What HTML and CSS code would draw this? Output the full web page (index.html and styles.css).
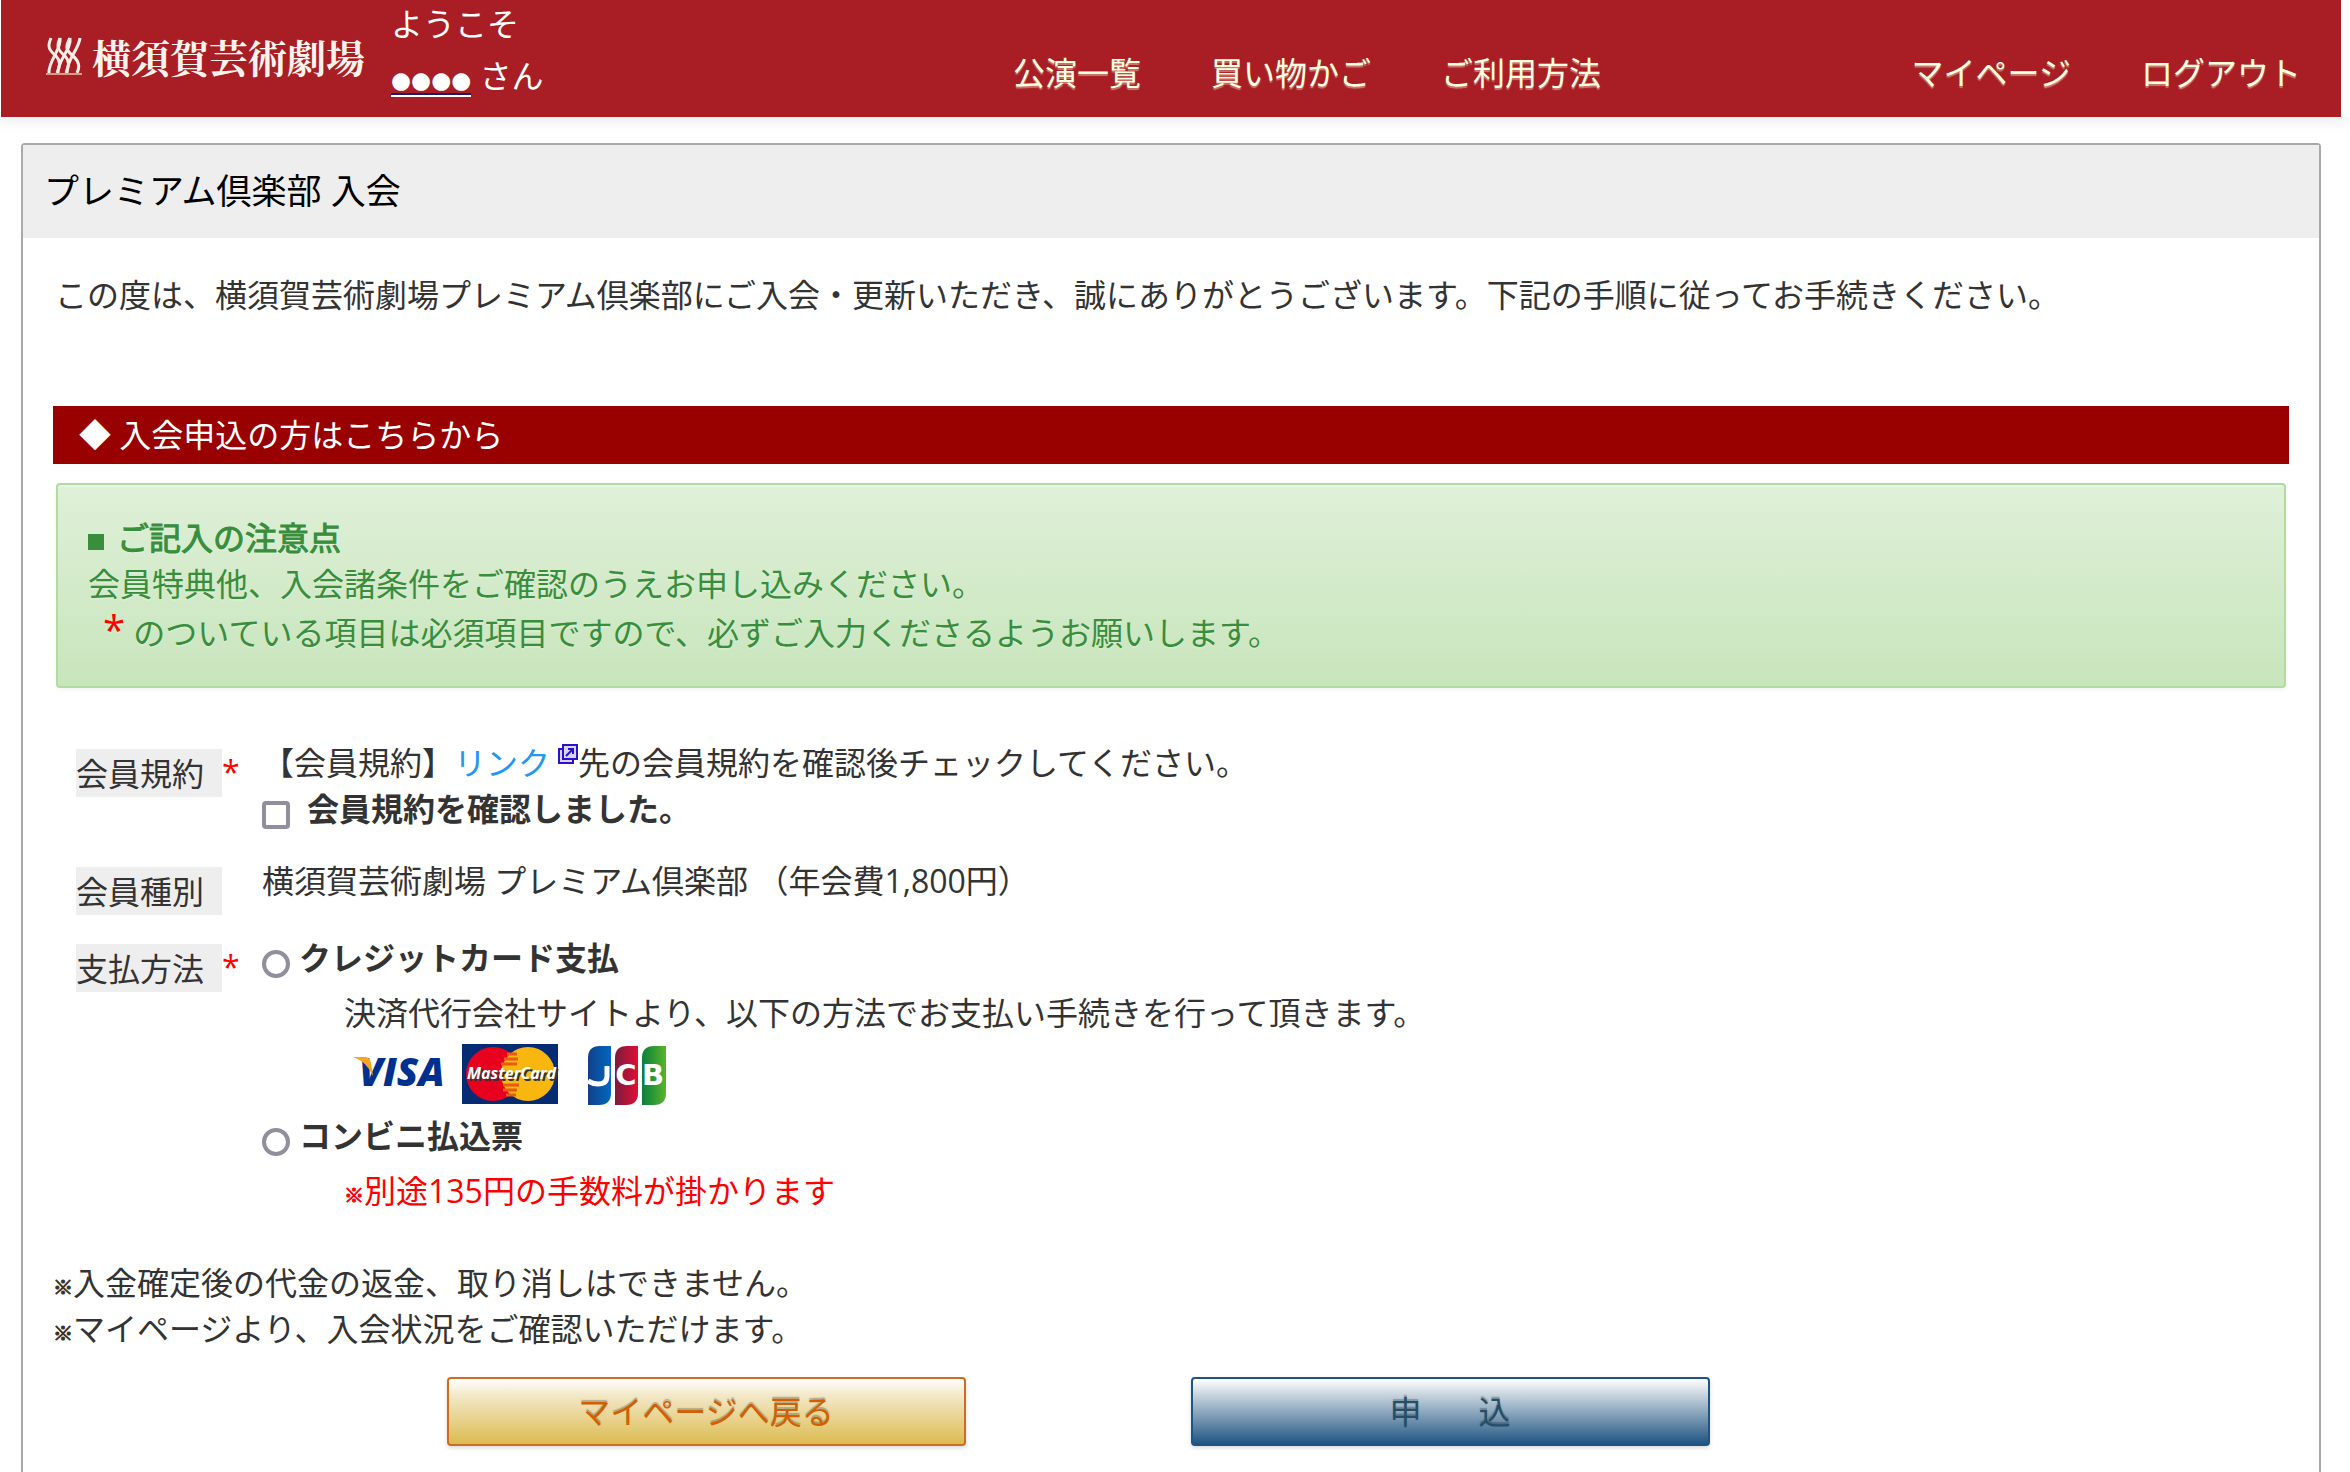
FILE: index.html
```
<!DOCTYPE html>
<html lang="ja">
<head>
    <meta charset="UTF-8">
    <meta name="viewport" content="width=device-width, initial-scale=1.0">
    <title>プレミアム倶楽部 入会</title>
    <link rel="stylesheet" href="styles.css">
</head>
<body>
    <header class="header">
        <div class="header-inner">
            <a class="logo" href="#">
                <svg class="logo-mark" viewBox="0 0 36 38" aria-hidden="true">
                    <g fill="none" stroke="#fbeee6" stroke-width="3">
                        <path d="M5 1C1 10 3 13 10 19C15 24 14 30 11 36"/>
                        <path d="M14 1C10 10 12 13 19 19C24 24 23 30 20 36"/>
                        <path d="M24 1C19 10 20 13 27 19C33 24 34 30 31 36"/>
                        <path d="M14 1C16 12 2 24 3 36M24 1C26 12 11 24 12 36M34 1C33 12 20 24 21 36"/>
                    </g>
                    <path d="M0 37h36" stroke="#d99b86" stroke-width="2"/>
                </svg>
                <span class="logo-text">横須賀芸術劇場</span>
            </a>
            <div class="welcome">
                <div>ようこそ</div>
                <div><a class="user-name" href="#">●●●●</a> さん</div>
            </div>
            <nav class="nav nav-main">
                <a href="#">公演一覧</a>
                <a href="#">買い物かご</a>
                <a href="#">ご利用方法</a>
            </nav>
            <nav class="nav nav-user">
                <a href="#">マイページ</a>
                <a href="#">ログアウト</a>
            </nav>
        </div>
    </header>

    <main class="panel">
        <h1 class="panel-title">プレミアム倶楽部 入会</h1>
        <form class="panel-body">
            <p class="intro">この度は、横須賀芸術劇場プレミアム倶楽部にご入会・更新いただき、誠にありがとうございます。下記の手順に従ってお手続きください。</p>

            <h2 class="section-title">◆ 入会申込の方はこちらから</h2>

            <div class="notice">
                <div class="notice-title"><span class="square"></span>ご記入の注意点</div>
                <div>会員特典他、入会諸条件をご確認のうえお申し込みください。</div>
                <div class="notice-required"><span class="star">*</span> のついている項目は必須項目ですので、必ずご入力くださるようお願いします。</div>
            </div>

            <div class="fields">
                <div class="row">
                    <div class="head"><span class="head-label">会員規約</span><span class="required">*</span></div>
                    <div class="data">
                        <div>【会員規約】<a class="link" href="#">リンク<svg class="external" viewBox="0 0 20 20" aria-hidden="true">
                            <path d="M0 4h4V0h16v16h-4v4H0z" fill="#2a12c8"/>
                            <path d="M2 6h2v10h10v2H2z" fill="#d9d3ff"/>
                            <path d="M6 2h12v12H6z" fill="#d9d3ff"/>
                            <path d="M8 12l7-7M10 5h5v5" fill="none" stroke="#2a12c8" stroke-width="2"/>
                        </svg></a>先の会員規約を確認後チェックしてください。</div>
                        <div class="option">
                            <input class="check" type="checkbox" id="agree">
                            <label class="check-label" for="agree">会員規約を確認しました。</label>
                        </div>
                    </div>
                </div>
                <div class="row">
                    <div class="head"><span class="head-label">会員種別</span></div>
                    <div class="data">横須賀芸術劇場 プレミアム倶楽部 （年会費1,800円）</div>
                </div>
                <div class="row">
                    <div class="head"><span class="head-label">支払方法</span><span class="required">*</span></div>
                    <div class="data">
                        <div class="option">
                            <input class="radio" type="radio" name="payment" id="credit">
                            <label for="credit">クレジットカード支払</label>
                        </div>
                        <div class="detail">決済代行会社サイトより、以下の方法でお支払い手続きを行って頂きます。</div>
                        <svg class="cards" viewBox="0 0 330 77" role="img" aria-label="VISA MasterCard JCB">
                            <defs>
                                <linearGradient id="blue"><stop offset="0" stop-color="#123f8c"/><stop offset="1" stop-color="#0069bd"/></linearGradient>
                                <linearGradient id="red"><stop offset="0" stop-color="#7d1b3a"/><stop offset="1" stop-color="#df0f38"/></linearGradient>
                                <linearGradient id="green"><stop offset="0" stop-color="#0b7f3e"/><stop offset="1" stop-color="#58b52c"/></linearGradient>
                            </defs>
                            <!-- VISA -->
                            <text class="visa" x="14" y="50">VISA</text>
                            <path d="M8 21h13q4 1 5 6l2 13q-7-15-20-19z" fill="#f6a51c"/>
                            <!-- MasterCard -->
                            <path d="M117 8h96v60h-96z" fill="#052b72"/>
                            <circle cx="148" cy="38" r="27" fill="#e8001f"/>
                            <circle cx="183" cy="38" r="27" fill="#f8b60f"/>
                            <path d="M162 18h10M159 23h14M156 28h16M158 49h16M158 54h14M161 59h10" stroke="#e85a18" stroke-width="3"/>
                            <text class="master master-shadow" x="124" y="45">MasterCard</text>
                            <text class="master" x="122" y="43">MasterCard</text>
                            <!-- JCB -->
                            <path d="M243 22q0-12 12-12h11v47q0 12-12 12h-11z" fill="url(#blue)"/>
                            <path d="M270 22q0-12 12-12h11v47q0 12-12 12h-11z" fill="url(#red)"/>
                            <path d="M297 22q0-12 12-12h12v47q0 12-12 12h-12z" fill="url(#green)"/>
                            <path d="M262 30v10q0 8-9 8-5 0-10-3" fill="none" stroke="#fff" stroke-width="5"/>
                            <text class="jcb" x="281" y="49">C</text>
                            <text class="jcb" x="308" y="49">B</text>
                        </svg>
                        <div class="option">
                            <input class="radio" type="radio" name="payment" id="store">
                            <label for="store">コンビニ払込票</label>
                        </div>
                        <div class="detail fee"><span class="mark">※</span>別途135円の手数料が掛かります</div>
                    </div>
                </div>
            </div>

            <div class="remarks">
                <div><span class="mark">※</span>入金確定後の代金の返金、取り消しはできません。</div>
                <div><span class="mark">※</span>マイページより、入会状況をご確認いただけます。</div>
            </div>

            <div class="buttons">
                <button class="btn btn-back" type="button">マイページへ戻る</button>
                <button class="btn btn-apply" type="submit">申　&nbsp;&nbsp;&nbsp;込</button>
            </div>
        </form>
    </main>
</body>
</html>
```
FILE: styles.css
```
* {
    box-sizing: border-box;
}

body {
    display: flex;
    flex-direction: column;
    min-height: 100vh;
    margin: 0;
    background-color: #fff;
    color: #333;
    font-family: "Open Sans", "Noto Sans CJK JP", sans-serif;
    font-size: 32px;
    line-height: 46px;
}

/* header */
.header {
    padding: 0 9px 0 1px;
    box-shadow: 0 2px 16px rgba(0, 0, 0, 0.1);
}

.header-inner {
    display: flex;
    align-items: flex-start;
    height: 117px;
    padding-left: 45px;
    background-color: #a81e24;
    color: #fff;
    white-space: nowrap;
}

.logo {
    display: flex;
    align-items: center;
    gap: 10px;
    width: 345px;
    margin-top: 34px;
    color: #fbf3ec;
    text-decoration: none;
}

.logo-mark {
    width: 36px;
    height: 38px;
}

.logo-text {
    font-family: "Noto Serif CJK JP", "Noto Sans CJK JP", serif;
    font-size: 39px;
    font-weight: bold;
    line-height: 44px;
}

.welcome {
    width: 587px;
    margin-top: -2px;
    line-height: 52px;
}

.user-name {
    display: inline-block;
    border-bottom: 2px solid #191970;
    box-shadow: 0 2px 0 #fff;
    color: #fff;
    font-family: "DejaVu Sans", sans-serif;
    font-size: 23px;
    line-height: 26px;
    text-decoration: none;
}

.nav {
    display: flex;
    margin-top: 50px;
}

.nav a {
    padding: 0 35px;
    color: #ffffe0;
    text-decoration: none;
    text-shadow: 0 2px 1px rgba(255, 255, 224, 0.4);
}

.nav-user {
    margin-right: 5px;
    margin-left: auto;
}

/* panel */
.panel {
    flex: 1;
    margin: 26px 29px 0 21px;
    border: 2px solid #a9a9a9;
    border-bottom: none;
    border-radius: 4px 4px 0 0;
}

.panel-title {
    margin: 0;
    padding: 21px 21px 23px;
    background-color: #eee;
    color: #000;
    font-size: 35px;
    font-weight: normal;
    line-height: 49px;
}

.panel-body {
    padding: 34px 30px 24px;
}

.intro {
    margin: 0 0 88px;
    padding-left: 2px;
}

.section-title {
    margin: 0 0 19px;
    padding: 6px 26px;
    background-color: #900;
    color: #fff;
    font-size: 32px;
    font-weight: normal;
}

.notice {
    margin: 0 3px;
    padding: 30px;
    border: 2px solid #b2dba1;
    border-radius: 4px;
    background-image: linear-gradient(#dff0d8, #c8e5bc);
    box-shadow: inset 0 2px 0 rgba(255, 255, 255, 0.25), 0 2px 4px rgba(0, 0, 0, 0.05);
    color: #388e3c;
    text-shadow: 0 2px 0 rgba(255, 255, 255, 0.2);
}

.notice-title {
    -webkit-text-stroke: 1px;
}

.square {
    display: inline-block;
    width: 16px;
    height: 16px;
    margin-right: 13px;
    background-color: #388e3c;
}

.notice-required {
    padding: 3px 0 0 15px;
}

.star {
    color: #f00;
    font-size: 40px;
    line-height: 32px;
}

/* form */
.fields {
    display: flex;
    flex-direction: column;
    gap: 20px;
    margin-top: 52px;
    padding-left: 23px;
}

.row {
    display: flex;
}

.head {
    display: flex;
    flex: none;
    align-items: flex-start;
    width: 186px;
    padding-top: 9px;
}

.head-label {
    width: 146px;
    padding-top: 2px;
    background-color: #eee;
}

.required {
    color: #f00;
}

.link {
    color: #2196f3;
    text-decoration: none;
}

.external {
    width: 20px;
    height: 20px;
    margin-left: 8px;
    vertical-align: 11px;
}

.option {
    display: flex;
    align-items: flex-start;
    height: 52px;
    font-weight: bold;
}

.check,
.radio {
    width: 28px;
    height: 28px;
    margin: 15px 9px 0 0;
    border: 4px solid #8f8f9d;
    border-radius: 4px;
    background-color: #fff;
    appearance: none;
}

.radio {
    border-radius: 50%;
}

.check-label {
    padding-left: 8px;
}

.detail {
    margin-top: 3px;
    padding-left: 82px;
}

.fee {
    color: #f00;
}

.cards {
    display: block;
    width: 330px;
    height: 77px;
    margin-left: 83px;
}

.visa {
    fill: #00308f;
    font: italic 800 39px "Open Sans", sans-serif;
}

.master {
    fill: #fff;
    font: italic bold 16px "Open Sans", sans-serif;
}

.master-shadow {
    fill: #333;
}

.jcb {
    fill: #fff;
    font: bold 29px "DejaVu Sans", sans-serif;
    text-anchor: middle;
}

.mark {
    font-size: 20px;
    font-weight: bold;
    line-height: 20px;
    -webkit-text-stroke: 1px;
}

.remarks {
    margin-top: 46px;
}

/* buttons */
.buttons {
    display: flex;
    justify-content: center;
    gap: 225px;
    margin-top: 25px;
    padding-right: 186px;
}

.btn {
    width: 519px;
    height: 69px;
    padding: 0;
    border: 2px solid;
    border-radius: 4px;
    box-shadow: 0 2px 4px rgba(0, 0, 0, 0.15);
    font-family: inherit;
    font-size: 32px;
    line-height: 46px;
    text-shadow: 0 -2px 1px rgba(0, 0, 0, 0.25);
    cursor: pointer;
}

.btn-back {
    border-color: #cc6d1f;
    background-image: linear-gradient(#fff, #f3e8c8 25%, #dcbb50);
    color: #d35f00;
}

.btn-apply {
    border-color: #1f5482;
    background-image: linear-gradient(#fff, #c6d3de 25%, #1f5482);
    color: #234f68;
}
```
